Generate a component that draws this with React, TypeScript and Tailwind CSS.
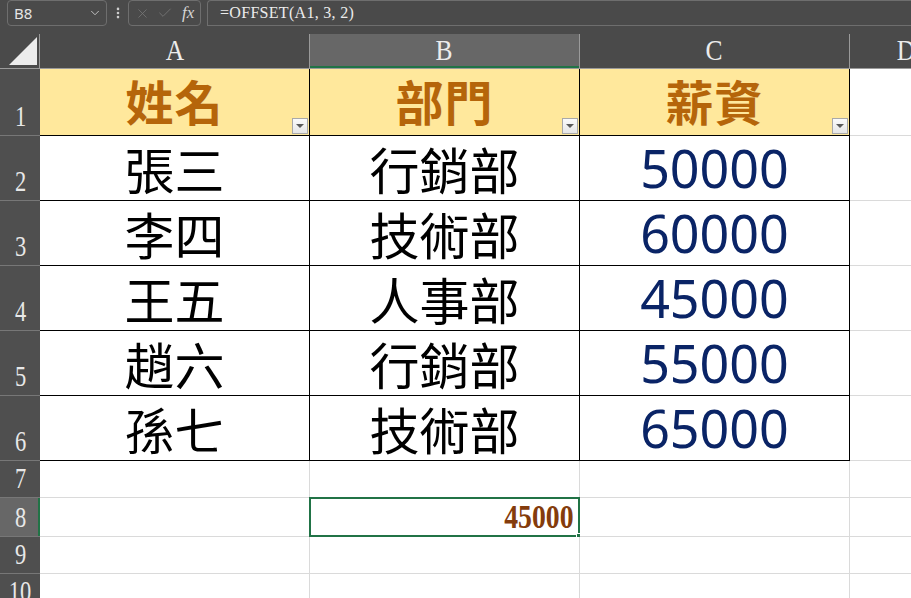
import { Check, ChevronDown, EllipsisVertical, X } from 'lucide-react'

const cjk = { fontFamily: '"Noto Sans CJK TC", "Noto Sans", sans-serif' }

type Row = { n: number; h: string; a?: string; b?: string; c?: string; head?: boolean }

const rows: Row[] = [
  { n: 1, h: 'h-[67px]', a: '姓名', b: '部門', c: '薪資', head: true },
  { n: 2, h: 'h-[65px]', a: '張三', b: '行銷部', c: '50000' },
  { n: 3, h: 'h-[65px]', a: '李四', b: '技術部', c: '60000' },
  { n: 4, h: 'h-[65px]', a: '王五', b: '人事部', c: '45000' },
  { n: 5, h: 'h-[65px]', a: '趙六', b: '行銷部', c: '55000' },
  { n: 6, h: 'h-[65px]', a: '孫七', b: '技術部', c: '65000' },
  { n: 7, h: 'h-[37px]' },
  { n: 8, h: 'h-[39px]' },
  { n: 9, h: 'h-[37px]' },
  { n: 10, h: 'h-[37px]' },
]

function FilterButton() {
  return (
    <div className="absolute right-[1px] bottom-[1px] w-[16px] h-[16px] border border-[#a9a9a9] bg-gradient-to-b from-[#fbfbfb] to-[#e6e6e6] flex items-center justify-center">
      <div className="w-0 h-0 border-l-[4px] border-r-[4px] border-t-[4px] border-l-transparent border-r-transparent border-t-[#5a5a5a]" />
    </div>
  )
}

function DataCell({ text, row, col }: { text?: string; row: Row; col: 'a' | 'b' | 'c' }) {
  const inTable = row.n <= 6
  const border = inTable ? 'border-r border-b border-black' : 'border-r border-b border-[#dadada]'
  let content = null
  if (text && row.head) {
    content = (
      <span className="text-[48px] font-bold leading-none text-[#b5650a] tracking-[1px] -mt-[4px]" style={cjk}>
        {text}
      </span>
    )
  } else if (text && col === 'c') {
    content = (
      <span className="text-[52px] leading-none text-[#0a2466]" style={{ fontFamily: '"Noto Sans", sans-serif' }}>
        {text}
      </span>
    )
  } else if (text) {
    content = (
      <span className="text-[50px] leading-none text-black" style={cjk}>
        {text}
      </span>
    )
  }
  return (
    <div
      className={`relative w-[270px] shrink-0 flex items-center justify-center ${border} ${row.head ? 'bg-[#ffe89c]' : 'bg-white'}`}
    >
      {content}
      {row.head && <FilterButton />}
      {row.n === 8 && col === 'b' && (
        <>
          <div className="absolute -left-[1px] -top-[1px] w-[271px] h-[40px] border-2 border-[#217346] flex items-center justify-end pr-[5px]">
            <span
              className="text-[33px] font-bold leading-none text-[#843c0c] scale-x-[0.84] origin-right"
              style={{ fontFamily: '"Liberation Serif", serif' }}
            >
              45000
            </span>
          </div>
          <div className="absolute -right-[3px] -bottom-[3px] w-[6px] h-[6px] bg-[#217346] border border-white" />
        </>
      )}
    </div>
  )
}

export default function App() {
  const serif = { fontFamily: '"Liberation Serif", serif' }
  return (
    <div className="w-[911px] h-[598px] overflow-hidden bg-[#4a4a4a] select-none">
      {/* formula bar */}
      <div className="h-[34px] flex items-start pl-[7px] gap-0">
        <div className="w-[100px] h-[26px] rounded-[4px] border border-[#6e6e6e] flex items-center justify-between pl-[6px] pr-[4px]">
          <span className="text-[15px] text-[#e4e4e4]" style={{ fontFamily: '"Noto Sans", sans-serif' }}>B8</span>
          <ChevronDown size={14} strokeWidth={1.5} className="text-[#cfcfcf]" />
        </div>
        <div className="w-[21px] h-[26px] flex items-center justify-center">
          <EllipsisVertical size={14} strokeWidth={2.5} className="text-[#cfcfcf]" />
        </div>
        <div className="w-[73px] h-[26px] rounded-[4px] border border-[#6e6e6e] flex items-center pl-[6px] gap-[7px]">
          <X size={15} strokeWidth={1.2} className="text-[#7a7a7a]" />
          <Check size={16} strokeWidth={1.2} className="text-[#7a7a7a]" />
          <span className="text-[17px] italic text-[#d6d6d6] ml-[2px]" style={serif}>
            fx
          </span>
        </div>
        <div className="flex-1 ml-[6px] h-[26px] rounded-tl-[4px] border-l border-b border-t border-[#6e6e6e] flex items-center pl-[12px]">
          <span className="text-[16px] text-[#ececec] tracking-[0.3px]" style={serif}>
            =OFFSET(A1,&nbsp;3,&nbsp;2)
          </span>
        </div>
      </div>

      {/* column headers */}
      <div className="flex h-[35px] border-b border-[#9a9a9a]">
        <div className="w-[40px] shrink-0 border-r border-[#9a9a9a] relative">
          <div className="absolute left-[9px] top-[3px] w-0 h-0 border-b-[28px] border-l-[28px] border-b-[#ececec] border-l-transparent" />
        </div>
        {['A', 'B', 'C'].map((l) => (
          <div
            key={l}
            className={`w-[270px] shrink-0 border-r border-[#9a9a9a] flex items-end justify-center pb-[3px] ${
              l === 'B' ? 'bg-[#676767] shadow-[inset_0_-2px_0_#217346]' : ''
            }`}
          >
            <span className="text-[30px] leading-none text-[#ececec] scale-x-[0.85]" style={serif}>
              {l}
            </span>
          </div>
        ))}
        <div className="flex-1 flex items-end justify-end pb-[3px] overflow-hidden">
          <span className="text-[30px] leading-none text-[#ececec] -mr-[6px] scale-x-[0.85]" style={serif}>
            D
          </span>
        </div>
      </div>

      {/* rows */}
      {rows.map((r) => (
        <div key={r.n} className={`flex ${r.h}`}>
          <div
            className={`w-[40px] shrink-0 border-b border-[#777] flex items-end justify-center pb-[4px] ${
              r.n === 8 ? 'bg-[#676767] shadow-[inset_-2px_0_0_#217346]' : 'bg-[#4f4f4f]'
            }`}
          >
            <span className="text-[30px] leading-none text-[#e8e8e8] scale-x-[0.75]" style={serif}>
              {r.n}
            </span>
          </div>
          <DataCell text={r.a} row={r} col="a" />
          <DataCell text={r.b} row={r} col="b" />
          <DataCell text={r.c} row={r} col="c" />
          <div className="flex-1 bg-white border-b border-[#dadada]" />
        </div>
      ))}
    </div>
  )
}
